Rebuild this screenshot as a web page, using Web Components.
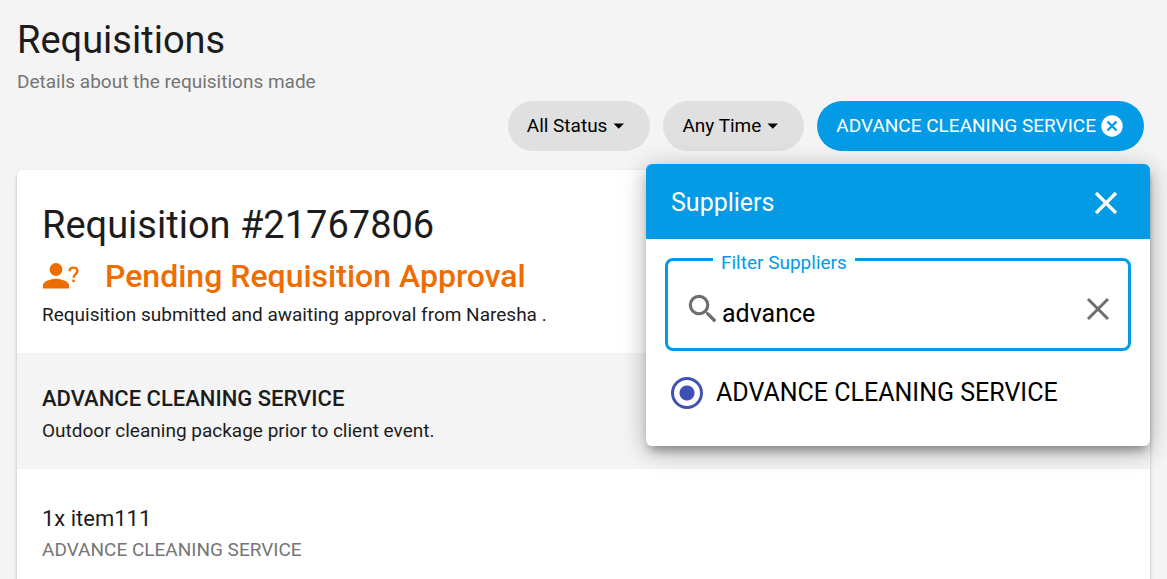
<!DOCTYPE html>
<html lang="en">
<head>
<meta charset="utf-8">
<meta name="viewport" content="width=device-width, initial-scale=1">
<title>Requisitions</title>
<style>
body {
    margin:0;
    background:#f4f4f4;
    color:#1c1c1c;
    font-family:Roboto, "Liberation Sans", sans-serif;
    font-size:19px;
    line-height:28px;
    --primary:#039be5;
    --muted:#757575;
}
</style>
</head>
<body>
<requisitions-page>
    <filter-bar slot="filters">
        <filter-chip>All Status</filter-chip>
        <filter-chip>Any Time</filter-chip>
        <filter-chip active>ADVANCE CLEANING SERVICE</filter-chip>
        <supplier-popover slot="popover" query="advance">
            <supplier-option>ADVANCE CLEANING SERVICE</supplier-option>
        </supplier-popover>
    </filter-bar>
    <requisition-card number="21767806">
        <span slot="status">Pending Requisition Approval</span>
        <span slot="message">Requisition submitted and awaiting approval from Naresha .</span>
        <span slot="supplier">ADVANCE CLEANING SERVICE</span>
        <span slot="description">Outdoor cleaning package prior to client event.</span>
        <requisition-item slot="items" quantity="1" name="item111">ADVANCE CLEANING SERVICE</requisition-item>
    </requisition-card>
</requisitions-page>

<script>
class RequisitionsPage extends HTMLElement {
    constructor() {
        super()
        const shadow = this.attachShadow({ mode: 'open' });
        shadow.innerHTML = `
        <style>
        :host {
            display:block;
            padding:16px 17px 0;
        }
        h1 {
            margin:0;
            font-size:38px;
            line-height:48px;
            font-weight:400;
        }
        p {
            margin:4px 0 5px;
            color:var(--muted);
        }
        </style>
        <header>
            <h1>Requisitions</h1>
            <p>Details about the requisitions made</p>
        </header>
        <slot name="filters"></slot>
        <main><slot></slot></main>
        `
    }
}

class FilterBar extends HTMLElement {
    constructor() {
        super()
        const shadow = this.attachShadow({ mode: 'open' });
        shadow.innerHTML = `
        <style>
        :host {
            display:block;
            position:relative;
            margin-bottom:19px;
        }
        div {
            display:flex;
            justify-content:flex-end;
            gap:13px;
            padding-right:6px;
        }
        </style>
        <div><slot></slot></div>
        <slot name="popover"></slot>
        `
    }
}

class FilterChip extends HTMLElement {
    constructor() {
        super()
        const shadow = this.attachShadow({ mode: 'open' });
        const icon = this.hasAttribute('active')
            ? `<svg width="24" height="22" viewBox="0 0 24 22" aria-hidden="true">
                <circle cx="11" cy="11" r="10.7" fill="#fff"/>
                <path d="M6.5 6.5l9 9M15.5 6.5l-9 9" stroke="#039be5" stroke-width="2.4"/>
            </svg>`
            : `<svg width="19" height="10" viewBox="0 0 19 10" aria-hidden="true">
                <path d="M1.500 2.500h10.500l-5.250 5.250z" fill="currentColor"/>
            </svg>`
        shadow.innerHTML = `
        <style>
        :host {
            display:block;
        }
        button {
            display:flex;
            align-items:center;
            gap:5px;
            height:50px;
            padding:0 19px;
            border:none;
            border-radius:25px;
            background:#e0e0e0;
            color:#000;
            font:inherit;
            cursor:pointer;
        }
        :host([active]) button {
            background:var(--primary);
            color:#fff;
        }
        </style>
        <button type="button"><slot></slot>${icon}</button>
        `
    }
}

class SupplierPopover extends HTMLElement {
    constructor() {
        super()
        const shadow = this.attachShadow({ mode: 'open' });
        shadow.innerHTML = `
        <style>
        :host {
            display:block;
            position:absolute;
            top:calc(100% + 13px);
            right:0;
            z-index:2;
            width:504px;
            max-width:100%;
            border-radius:6px;
            background:#fff;
            overflow:hidden;
            box-shadow:0 8px 10px -4px rgba(0,0,0,.3), 0 6px 22px rgba(0,0,0,.22), 0 2px 30px rgba(0,0,0,.1);
            color:#000;
            font-size:25px;
        }
        header {
            display:flex;
            align-items:center;
            justify-content:space-between;
            box-sizing:border-box;
            height:75px;
            padding:3px 25px 0;
            background:var(--primary);
            color:#fff;
        }
        h2 {
            margin:0;
            font-size:25px;
            font-weight:400;
        }
        button {
            display:flex;
            padding:4px;
            border:none;
            background:none;
            color:inherit;
            cursor:pointer;
        }
        .field {
            position:relative;
            display:flex;
            align-items:center;
            box-sizing:border-box;
            height:93px;
            margin:19px 19px 0;
            padding:8px 16px 0;
            border:3px solid var(--primary);
            border-radius:8px;
            color:#6e6e6e;
        }
        label {
            position:absolute;
            top:-12px;
            left:45px;
            padding:0 8px;
            background:#fff;
            color:var(--primary);
            font-size:19px;
            line-height:28px;
        }
        input {
            flex:1;
            min-width:0;
            height:44px;
            margin-top:10px;
            padding:0;
            border:none;
            outline:none;
            background:none;
            color:#000;
            font:inherit;
        }
        .options {
            padding:20px 25px 31px;
        }
        </style>
        <header>
            <h2>Suppliers</h2>
            <button type="button" class="close" aria-label="Close">
                <svg width="30" height="30" viewBox="0 0 30 30"><path d="M5 5l20 20M25 5L5 25" stroke="currentColor" stroke-width="3.200"/></svg>
            </button>
        </header>
        <div class="field">
            <label for="query">Filter Suppliers</label>
            <svg width="38" height="38" viewBox="0 0 24 24" aria-hidden="true"><path fill="currentColor" d="M15.5 14h-.79l-.28-.27A6.471 6.471 0 0 0 16 9.500 6.500 6.500 0 1 0 9.500 16c1.610 0 3.090-.59 4.230-1.570l.27.28v.79l5 4.990L20.490 19l-4.990-5zm-6 0C7.010 14 5 11.990 5 9.500S7.010 5 9.500 5 14 7.010 14 9.500 11.990 14 9.500 14z"/></svg>
            <input id="query" type="text" autocomplete="off">
            <button type="button" class="clear" aria-label="Clear">
                <svg width="20" height="20" viewBox="0 0 20 20" overflow="visible"><path d="M0 0l20 20M20 0L0 20" stroke="currentColor" stroke-width="3"/></svg>
            </button>
        </div>
        <div class="options"><slot></slot></div>
        `
        this.input = shadow.querySelector('input')
        this.input.value = this.getAttribute('query') || ''
    }

    connectedCallback() {
        this.shadowRoot.querySelector('.close').addEventListener('click',()=>{
            this.style.display = 'none'
        })
        this.shadowRoot.querySelector('.clear').addEventListener('click',()=>{
            this.input.value = ''
        })
    }
}

class SupplierOption extends HTMLElement {
    constructor() {
        super()
        const shadow = this.attachShadow({ mode: 'open' });
        shadow.innerHTML = `
        <style>
        :host {
            display:block;
        }
        label {
            display:flex;
            align-items:center;
            gap:13px;
            line-height:44px;
        }
        input {
            appearance:none;
            width:32px;
            height:32px;
            margin:0;
            border:3px solid #3f51b5;
            border-radius:50%;
        }
        input:checked {
            background:radial-gradient(circle, #3f51b5 7px, transparent 8px);
        }
        </style>
        <label><input type="radio" name="supplier" checked><span><slot></slot></span></label>
        `
    }
}

class RequisitionCard extends HTMLElement {
    constructor() {
        super()
        const shadow = this.attachShadow({ mode: 'open' });
        shadow.innerHTML = `
        <style>
        :host {
            display:block;
            border-radius:6px;
            background:#fff;
            overflow:hidden;
            box-shadow:0 3px 2px -2px rgba(0,0,0,.2), 0 2px 3px rgba(0,0,0,.14), 0 2px 5px rgba(0,0,0,.12);
        }
        h2, h3, h4, p {
            margin:0;
            font-weight:400;
        }
        .summary {
            padding:31px 25px 24px;
        }
        h2 {
            font-size:38px;
            line-height:48px;
        }
        h3 {
            display:flex;
            align-items:center;
            gap:25px;
            margin:7px 0 5px;
            color:#ef6c00;
            font-size:32px;
            font-weight:500;
            line-height:40px;
        }
        .supplier {
            padding:32px 25px 24px;
            background:#f4f4f4;
        }
        h4 {
            margin-bottom:4px;
            font-size:22px;
            font-weight:500;
        }
        .items {
            padding:36px 25px 24px;
        }
        </style>
        <section class="summary">
            <h2>Requisition #${this.getAttribute('number')}</h2>
            <h3>
                <svg width="38" height="38" viewBox="0 0 38 38" aria-hidden="true">
                    <circle cx="14" cy="12.500" r="6.400" fill="currentColor"/>
                    <path d="M1 31.500v-3.200c0-4.200 8.600-6.500 13-6.500s13 2.300 13 6.500v3.200z" fill="currentColor"/>
                    <path d="M27.600 14.200c0-2.300 1.700-3.600 3.900-3.600s3.900 1.400 3.900 3.500c0 3-3.900 3.200-3.900 6.700" fill="none" stroke="currentColor" stroke-width="2.400"/>
                    <path d="M30.300 22.600h2.500v2.500h-2.500z" fill="currentColor"/>
                </svg>
                <slot name="status"></slot>
            </h3>
            <p><slot name="message"></slot></p>
        </section>
        <section class="supplier">
            <h4><slot name="supplier"></slot></h4>
            <p><slot name="description"></slot></p>
        </section>
        <section class="items"><slot name="items"></slot></section>
        `
    }
}

class RequisitionItem extends HTMLElement {
    constructor() {
        super()
        const shadow = this.attachShadow({ mode: 'open' });
        shadow.innerHTML = `
        <style>
        :host {
            display:block;
        }
        p {
            margin:0;
        }
        .name {
            margin-bottom:3px;
            font-size:22px;
        }
        .vendor {
            color:var(--muted);
        }
        </style>
        <p class="name">${this.getAttribute('quantity')}x ${this.getAttribute('name')}</p>
        <p class="vendor"><slot></slot></p>
        `
    }
}

customElements.define('requisitions-page', RequisitionsPage)
customElements.define('filter-bar', FilterBar)
customElements.define('filter-chip', FilterChip)
customElements.define('supplier-popover', SupplierPopover)
customElements.define('supplier-option', SupplierOption)
customElements.define('requisition-card', RequisitionCard)
customElements.define('requisition-item', RequisitionItem)
</script>
</body>
</html>
